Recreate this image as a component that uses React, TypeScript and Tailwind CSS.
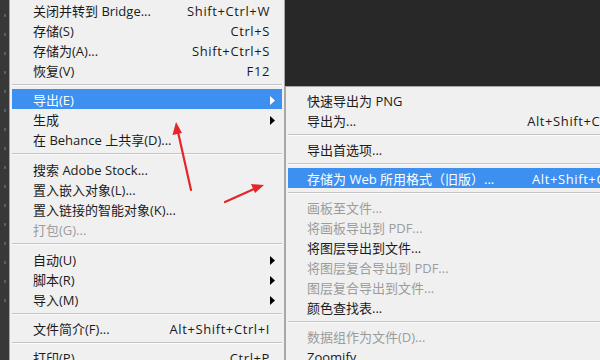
import React from "react";

type Item =
  | { sep: number }
  | { label: string; keys?: string; arrow?: boolean; off?: boolean; on?: boolean; sep?: undefined };

const mainItems: Item[] = [
  { label: "关闭并转到 Bridge...", keys: "Shift+Ctrl+W" },
  { label: "存储(S)", keys: "Ctrl+S" },
  { label: "存储为(A)...", keys: "Shift+Ctrl+S" },
  { label: "恢复(V)", keys: "F12" },
  { sep: 9 },
  { label: "导出(E)", arrow: true, on: true },
  { label: "生成", arrow: true },
  { label: "在 Behance 上共享(D)..." },
  { sep: 10 },
  { label: "搜索 Adobe Stock..." },
  { label: "置入嵌入对象(L)..." },
  { label: "置入链接的智能对象(K)..." },
  { label: "打包(G)...", off: true },
  { sep: 10 },
  { label: "自动(U)", arrow: true },
  { label: "脚本(R)", arrow: true },
  { label: "导入(M)", arrow: true },
  { sep: 9 },
  { label: "文件简介(F)...", keys: "Alt+Shift+Ctrl+I" },
  { sep: 9 },
  { label: "打印(P)...", keys: "Ctrl+P" },
];

const subItems: Item[] = [
  { label: "快速导出为 PNG" },
  { label: "导出为...", keys: "Alt+Shift+Ctrl+W" },
  { sep: 9 },
  { label: "导出首选项..." },
  { sep: 9 },
  { label: "存储为 Web 所用格式（旧版）...", keys: "Alt+Shift+Ctrl+S", on: true },
  { sep: 9 },
  { label: "画板至文件...", off: true },
  { label: "将画板导出到 PDF...", off: true },
  { label: "将图层导出到文件..." },
  { label: "将图层复合导出到 PDF...", off: true },
  { label: "图层复合导出到文件...", off: true },
  { label: "颜色查找表..." },
  { sep: 9 },
  { label: "数据组作为文件(D)...", off: true },
  { label: "Zoomify..." },
];

const Caret = ({ white }: { white?: boolean }) => (
  <svg width="5" height="9" viewBox="0 0 5 9" className="shrink-0 -mr-[5px]">
    <path d="M0 0 L5 4.5 L0 9 Z" fill={white ? "#ffffff" : "#000000"} />
  </svg>
);

const MenuList = ({ items, textPl, keysPr }: { items: Item[]; textPl: string; keysPr: string }) => (
  <div className="flex flex-col">
    {items.map((it, i) =>
      it.sep !== undefined ? (
        <div
          key={i}
          className={`${it.sep === 10 ? "h-[10px]" : "h-[9px]"} shrink-0 flex flex-col justify-center px-[2px]`}
        >
          <div className="h-px bg-[#c4c4c4]" />
          <div className="h-px bg-[#fbfbfb]" />
        </div>
      ) : (
        <div
          key={i}
          className={`h-5 shrink-0 flex items-center pt-[2px] mx-[2px] ${textPl} ${keysPr} ${
            it.on ? "bg-[#3d8ff0] text-white" : it.off ? "text-[#9c9c9c]" : "text-[#1b1b1b]"
          }`}
        >
          <span className="flex-1 whitespace-nowrap">{it.label}</span>
          {it.keys && <span className="whitespace-nowrap tracking-[0.6px]">{it.keys}</span>}
          {it.arrow && <Caret white={it.on} />}
        </div>
      )
    )}
  </div>
);

export default function App() {
  return (
    <div
      className="relative w-[600px] h-[360px] overflow-hidden bg-[#282828] flex text-[13px] leading-none"
      style={{ fontFamily: '"Open Sans", "Noto Sans CJK SC", sans-serif' }}
    >
      {/* toolbar edge */}
      <div className="w-[9px] shrink-0 bg-[#383838] flex flex-col items-center gap-[16px] pt-[14px]">
        {Array.from({ length: 16 }).map((_, i) => (
          <div key={i} className="w-[2px] h-[3px] bg-[#5e5e5e]" />
        ))}
      </div>

      {/* main menu */}
      <div className="w-[276px] shrink-0 bg-[#f0f0f0] border-l border-r border-[#a8a8a8]">
        <MenuList items={mainItems} textPl="pl-[21px]" keysPr="pr-[12px]" />
      </div>

      {/* submenu column */}
      <div className="flex flex-col shrink-0">
        <div className="h-[86px] shrink-0 bg-[#282828]" />
        <div className="w-[365px] shrink-0 bg-[#f0f0f0] border-l border-t border-[#a8a8a8] pt-[3px]">
          <MenuList items={subItems} textPl="pl-[19px]" keysPr="pr-[12px]" />
        </div>
      </div>

      {/* red annotation arrows */}
      <svg className="absolute inset-0 pointer-events-none" width="600" height="360" viewBox="0 0 600 360">
        <path d="M191 190 L178 132" stroke="#e3262b" strokeWidth="2.2" strokeLinecap="round" />
        <path d="M176 122 L172.5 135 L182 133 Z" fill="#e3262b" />
        <path d="M225 202 L254 189" stroke="#e3262b" strokeWidth="2.2" strokeLinecap="round" />
        <path d="M264 185 L251 184 L255 193 Z" fill="#e3262b" />
      </svg>
    </div>
  );
}
